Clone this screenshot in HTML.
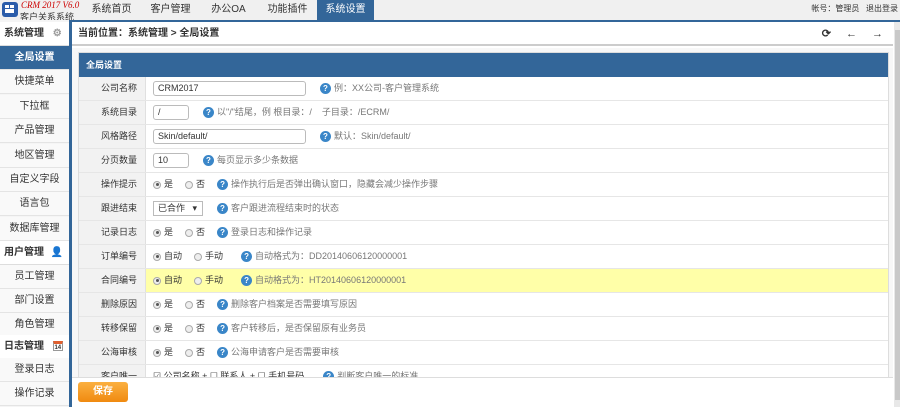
<!DOCTYPE html>
<html><head><meta charset="utf-8"><style>
*{margin:0;padding:0;box-sizing:border-box}
body{width:900px;height:407px;overflow:hidden;background:#fff;font-family:"Liberation Sans","Noto Sans CJK SC",sans-serif;position:relative;color:#333}
.a{position:absolute}
#top{left:0;top:0;width:900px;height:20px;background:#f0f0f0}
.nav{top:0;height:20px;line-height:20px;font-size:10px;color:#333;text-align:center;width:57px}
#line{left:70px;top:20px;width:830px;height:2px;background:#336699}
#side{left:0;top:20px;width:69px;height:387px;background:#f5f5f5}
#sb{left:69px;top:20px;width:3px;height:387px;background:#336699}
.si{left:0;width:69px;height:24px;line-height:24px;font-size:10px;text-align:center;color:#333;border-bottom:1px solid #e4e4e4;background:#f9f9f9}
.sh{left:0;width:69px;height:24px;line-height:24px;font-size:10px;font-weight:bold;padding-left:4px;background:#fff;border-bottom:1px solid #ddd}
#bc{left:72px;top:22px;width:821px;height:24px;border-bottom:2px solid #ccc;background:#fff;font-size:10px;font-weight:bold;line-height:24px;padding-left:6px}
#mainbg{left:72px;top:48px;width:821px;height:330px;background:#f7f7f7}
#panel{left:78px;top:52px;width:811px;height:326px;background:#fff;border:1px solid #ddd;overflow:hidden}
#ph{left:0;top:0;width:811px;height:24px;background:#336699;color:#fff;font-size:9px;font-weight:bold;line-height:24px;padding-left:7px}
.row{left:0;width:811px;height:24px;border-bottom:1px solid #e6e6e6;font-size:9px;line-height:23px}
.lb{position:absolute;left:0;top:0;width:67px;height:23px;background:#f2f2f2;border-right:1px solid #e0e0e0;text-align:right;padding-right:8px;color:#333}
.ct{position:absolute;left:74px;top:0;white-space:nowrap;color:#777;display:flex;align-items:center;height:23px}
.inp{display:inline-block;height:15px;border:1px solid #bbb;border-radius:3px;line-height:13px;padding-left:4px;color:#333;margin-right:14px;background:#fff}
.q{display:inline-block;width:11px;height:11px;border-radius:50%;background:#3a86c8;color:#fff;font-size:8px;line-height:11px;text-align:center;margin-right:3px;font-weight:bold}
.r{display:inline-block;width:8px;height:8px;border-radius:50%;border:1px solid #aaa;background:#eee;margin-right:3px;position:relative}
.r.on::after{content:"";position:absolute;left:1.5px;top:1.5px;width:3px;height:3px;border-radius:50%;background:#555}
.t{color:#333;margin-right:12px}
#bot{left:72px;top:377px;width:821px;height:30px;background:#fff;border-top:1px solid #ddd}
#save{left:78px;top:382px;width:50px;height:20px;background:linear-gradient(#fbb040,#f08a10);border-radius:3px;color:#fff;font-size:10px;font-weight:bold;text-align:center;line-height:20px}
#scroll{left:894px;top:22px;width:6px;height:385px;background:#e8e8e8}
#thumb{left:895px;top:30px;width:5px;height:370px;background:#c8c8c8}
</style></head><body>
<div id="top" class="a"></div>
<div class="a" style="left:2px;top:2px;width:16px;height:15px;background:#2a5caa;border-radius:3px"></div>
<div class="a" style="left:5px;top:5px;width:4px;height:3px;background:#fff"></div><div class="a" style="left:10px;top:5px;width:4px;height:3px;background:#fff"></div><div class="a" style="left:5px;top:9px;width:9px;height:4px;background:#fff"></div>
<div class="a" style="left:21px;top:0px;font-size:9px;font-style:italic;color:#c00;font-family:'Liberation Serif',serif;white-space:nowrap">CRM 2017 V6.0</div>
<div class="a" style="left:20px;top:10px;font-size:9px;color:#333;white-space:nowrap">客户关系系统</div>
<div class="a nav" style="left:83px">系统首页</div>
<div class="a nav" style="left:142px">客户管理</div>
<div class="a nav" style="left:200px">办公OA</div>
<div class="a nav" style="left:259px">功能插件</div>
<div class="a nav" style="left:317px;background:#336699;color:#fff">系统设置</div>
<div class="a" style="right:2px;top:3px;font-size:8px;color:#333;white-space:nowrap">帐号：管理员 &nbsp; 退出登录</div>
<div id="line" class="a"></div>
<div id="side" class="a"></div>
<div class="a sh" style="top:22px">系统管理 <span style="color:#999;margin-left:6px">⚙</span></div>
<div class="a si" style="top:46px;background:#336699;color:#fff;font-weight:bold">全局设置</div>
<div class="a si" style="top:70px">快捷菜单</div>
<div class="a si" style="top:95px">下拉框</div>
<div class="a si" style="top:119px">产品管理</div>
<div class="a si" style="top:144px">地区管理</div>
<div class="a si" style="top:168px">自定义字段</div>
<div class="a si" style="top:192px">语言包</div>
<div class="a si" style="top:217px">数据库管理</div>
<div class="a sh" style="top:241px">用户管理 <span style="color:#e08a2c;margin-left:4px">👤</span></div>
<div class="a si" style="top:265px">员工管理</div>
<div class="a si" style="top:289px">部门设置</div>
<div class="a si" style="top:313px">角色管理</div>
<div class="a sh" style="top:335px">日志管理 <span style="display:inline-block;width:10px;height:10px;border:1px solid #999;font-size:6px;line-height:8px;text-align:center;margin-left:6px;border-top:3px solid #e06030">14</span></div>
<div class="a si" style="top:358px">登录日志</div>
<div class="a si" style="top:382px">操作记录</div>
<div id="sb" class="a"></div>
<div id="bc" class="a">当前位置：系统管理 &gt; 全局设置
<span style="position:absolute;right:62px;top:0;font-size:11px;color:#333">⟳</span>
<span style="position:absolute;right:36px;top:0;font-size:11px;color:#333">←</span>
<span style="position:absolute;right:10px;top:0;font-size:11px;color:#333">→</span></div>
<div id="mainbg" class="a"></div>
<div id="panel" class="a">
<div id="ph" class="a">全局设置</div>
<div class="a row" style="top:24px"><div class="lb">公司名称</div><div class="ct"><span class="inp" style="width:153px">CRM2017</span><span class="q">?</span>例：XX公司-客户管理系统</div></div>
<div class="a row" style="top:48px"><div class="lb">系统目录</div><div class="ct"><span class="inp" style="width:36px">/</span><span class="q">?</span>以"/"结尾，例 根目录：/ &nbsp;&nbsp; 子目录：/ECRM/</div></div>
<div class="a row" style="top:72px"><div class="lb">风格路径</div><div class="ct"><span class="inp" style="width:153px">Skin/default/</span><span class="q">?</span>默认：Skin/default/</div></div>
<div class="a row" style="top:96px"><div class="lb">分页数量</div><div class="ct"><span class="inp" style="width:36px">10</span><span class="q">?</span>每页显示多少条数据</div></div>
<div class="a row" style="top:120px"><div class="lb">操作提示</div><div class="ct"><span class="r on"></span><span class="t">是</span><span class="r"></span><span class="t">否</span><span class="q">?</span>操作执行后是否弹出确认窗口，隐藏会减少操作步骤</div></div>
<div class="a row" style="top:144px"><div class="lb">跟进结束</div><div class="ct"><span class="inp" style="width:50px;border-radius:0;margin-right:14px">已合作 &nbsp;&nbsp;▾</span><span class="q">?</span>客户跟进流程结束时的状态</div></div>
<div class="a row" style="top:168px"><div class="lb">记录日志</div><div class="ct"><span class="r on"></span><span class="t">是</span><span class="r"></span><span class="t">否</span><span class="q">?</span>登录日志和操作记录</div></div>
<div class="a row" style="top:192px"><div class="lb">订单编号</div><div class="ct"><span class="r on"></span><span class="t">自动</span><span class="r"></span><span class="t" style="margin-right:18px">手动</span><span class="q">?</span>自动格式为：DD20140606120000001</div></div>
<div class="a row" style="top:216px;background:#ffffa8"><div class="lb">合同编号</div><div class="ct"><span class="r on"></span><span class="t">自动</span><span class="r"></span><span class="t" style="margin-right:18px">手动</span><span class="q">?</span>自动格式为：HT20140606120000001</div></div>
<div class="a row" style="top:240px"><div class="lb">删除原因</div><div class="ct"><span class="r on"></span><span class="t">是</span><span class="r"></span><span class="t">否</span><span class="q">?</span>删除客户档案是否需要填写原因</div></div>
<div class="a row" style="top:264px"><div class="lb">转移保留</div><div class="ct"><span class="r on"></span><span class="t">是</span><span class="r"></span><span class="t">否</span><span class="q">?</span>客户转移后，是否保留原有业务员</div></div>
<div class="a row" style="top:288px"><div class="lb">公海审核</div><div class="ct"><span class="r on"></span><span class="t">是</span><span class="r"></span><span class="t">否</span><span class="q">?</span>公海申请客户是否需要审核</div></div>
<div class="a row" style="top:312px"><div class="lb">客户唯一</div><div class="ct"><span class="t" style="margin-right:3px">☑ 公司名称 + ☐ 联系人 + ☐ 手机号码</span><span style="margin-left:16px" class="q">?</span>判断客户唯一的标准</div></div>
</div>
<div id="bot" class="a"></div>
<div id="save" class="a">保存</div>
<div id="scroll" class="a"></div><div id="thumb" class="a"></div>
</body></html>
